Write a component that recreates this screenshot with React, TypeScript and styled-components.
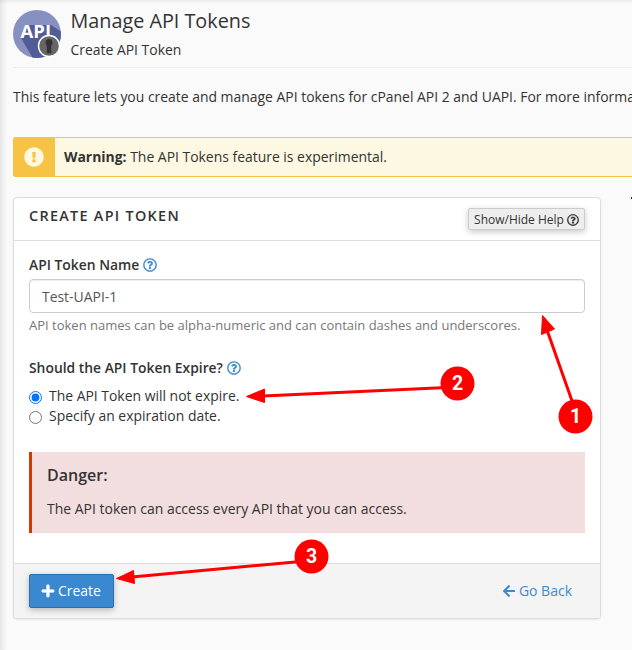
import React from "react";
import styled, { createGlobalStyle } from "styled-components";
import { FaArrowLeft, FaExclamationCircle, FaPlus, FaRegQuestionCircle } from "react-icons/fa";

const GlobalStyle = createGlobalStyle`
  * { box-sizing: border-box; }
  html, body { margin: 0; overflow: hidden; }
  body {
    background: #fafafa;
    color: #333;
    font: 13.93px/20px "Open Sans", sans-serif;
  }
`;

const Page = styled.main`
  position: relative;
  width: 632px;
  height: 650px;
  padding: 10px 0 0 13px;
  overflow: hidden;
  background:
    linear-gradient(to right, rgba(0, 0, 0, 0.08), rgba(0, 0, 0, 0) 7px),
    linear-gradient(to bottom, rgba(0, 0, 0, 0.06), rgba(0, 0, 0, 0) 4px),
    #fafafa;
`;

const PageHeader = styled.header`
  display: flex;
  gap: 8.5px;
  height: 58px;
  border-bottom: 1px solid #eee;
`;

const AppIcon = styled.svg`
  display: block;
  flex: none;
  width: 49px;
  height: 49px;
`;

const Title = styled.h1`
  margin: -3px 0 0;
  font-size: 19.8px;
  font-weight: 400;
  line-height: 28px;
`;

const Subtitle = styled.div`
  margin-top: 5px;
`;

const Description = styled.p`
  margin: 19px 0 30px;
  white-space: nowrap;
`;

const Alert = styled.div`
  display: flex;
  width: 640px;
  height: 40px;
  border: 1px solid #f6c342;
  border-radius: 2px;
  background: #fdf8e1;
`;

const AlertIcon = styled.div`
  display: flex;
  align-items: center;
  justify-content: center;
  width: 41px;
  padding-right: 2px;
  background: #f6c342;
  color: #fdf8e1;
  font-size: 20px;
`;

const AlertText = styled.div`
  padding: 9px;
`;

const Columns = styled.div`
  display: flex;
  gap: 30px;
  margin-top: 20px;
`;

const AsideEdge = styled.div`
  width: 8px;
  height: 2px;
  background: #333;
`;

const Panel = styled.section`
  flex: none;
  width: 588px;
  height: 422px;
  border: 1px solid #ddd;
  border-radius: 4px;
  background: #fff;
  box-shadow: 0 1px 2px rgba(0, 0, 0, 0.08);
  overflow: hidden;
`;

const PanelHeader = styled.div`
  display: flex;
  justify-content: space-between;
  height: 43px;
  padding: 9px 15px 0;
  border-bottom: 1px solid #ddd;
`;

const PanelTitle = styled.h2`
  margin: 0;
  font-size: 14.4px;
  font-weight: 600;
  line-height: 18px;
  letter-spacing: 1.3px;
`;

const HelpButton = styled.button`
  display: flex;
  align-items: center;
  justify-content: center;
  gap: 3px;
  width: 117px;
  height: 22px;
  margin-top: 1px;
  padding: 1px 0 0;
  border: 1px solid #ccc;
  border-radius: 2px;
  background: #eee;
  color: #333;
  font: 12px/18px "Open Sans", sans-serif;
  box-shadow: 0 2px 6px rgba(0, 0, 0, 0.22);
  white-space: nowrap;
  svg { stroke: currentColor; stroke-width: 8px; overflow: visible; }
`;

const PanelBody = styled.div`
  height: 322px;
  padding: 14px 15px 0;
`;

const Label = styled.div`
  display: flex;
  align-items: center;
  gap: 4px;
  font-size: 13.86px;
  font-weight: 600;
  svg {
    color: #428bca;
    font-size: 14px;
    stroke: currentColor;
    stroke-width: 6px;
    overflow: visible;
  }
`;

const TextInput = styled.input`
  display: block;
  width: 100%;
  height: 34px;
  margin-top: 4px;
  padding: 6px 12px;
  border: 1px solid #ccc;
  border-radius: 4px;
  color: #555;
  background: #fff;
  font: 13.93px/20px "Open Sans", sans-serif;
  box-shadow: inset 0 1px 1px rgba(0, 0, 0, 0.075);
`;

const HelpText = styled.div`
  margin: 2px 0 23px;
  color: #777;
  font-size: 13px;
`;

const Choice = styled.label<{ $first?: boolean }>`
  display: flex;
  height: 20px;
  margin-top: ${({ $first }) => ($first ? "8px" : "0")};
  input {
    width: 13px;
    height: 13px;
    margin: 5px 7px 0 0;
  }
`;

const Callout = styled.div`
  height: 81px;
  margin-top: 26px;
  padding: 13px 15px;
  border-left: 3px solid #cf3c00;
  background: #f2dede;
`;

const CalloutTitle = styled.h3`
  margin: 0 0 14px;
  font-size: 16px;
  font-weight: 600;
  line-height: 20px;
`;

const CalloutText = styled.div`
  font-size: 13.97px;
`;

const PanelFooter = styled.footer`
  display: flex;
  align-items: flex-start;
  justify-content: space-between;
  height: 56px;
  padding: 10px 28px 0 15px;
  border-top: 1px solid #ddd;
  background: #f4f4f4;
`;

const CreateButton = styled.button`
  display: flex;
  align-items: center;
  justify-content: center;
  gap: 3px;
  width: 85px;
  height: 34px;
  padding: 0 1px 0 0;
  border: 1px solid #2a6fb0;
  border-radius: 2px;
  color: #fff;
  background: #3a89d0;
  font: 13.93px/20px "Open Sans", sans-serif;
  box-shadow: 0 2px 6px rgba(0, 0, 0, 0.26);
  svg { stroke: currentColor; stroke-width: 22px; }
`;

const BackLink = styled.a`
  display: flex;
  align-items: center;
  gap: 3px;
  height: 34px;
  color: #428bca;
  font-size: 14px;
`;

const Annotations = styled.svg`
  position: absolute;
  inset: 0;
  width: 632px;
  height: 650px;
  pointer-events: none;
  text {
    fill: #fff;
    font: 700 19.5px Roboto, sans-serif;
    text-anchor: middle;
  }
`;

type Step = {
  n: number;
  cx: number;
  cy: number;
  from: [number, number];
  to: [number, number];
  head: string;
};

const steps: Step[] = [
  { n: 1, cx: 575.5, cy: 416.5, from: [577.5, 416.5], to: [547, 330], head: "542.5,315.5 554.5,329 541.5,334.5" },
  { n: 2, cx: 457.5, cy: 383.5, from: [457.5, 387], to: [263, 396], head: "246.5,396.5 264.5,389 264.5,402.5" },
  { n: 3, cx: 311.5, cy: 556.5, from: [311.5, 560.5], to: [132, 577], head: "116.5,578.5 133.5,570.5 134.5,583.5" },
];

export default function App() {
  return (
    <Page>
      <GlobalStyle />
      <PageHeader>
        <AppIcon viewBox="0 0 49 49">
          <defs>
            <clipPath id="disc"><circle cx="24" cy="24" r="24" /></clipPath>
          </defs>
          <circle cx="24" cy="24" r="24" fill="#8791c1" />
          <path clipPath="url(#disc)" d="M8 28 15 15 38 15 52 24 52 52 22 52Z" fill="#515c96" />
          <text x="22.8" y="28.3" fill="#fff" textAnchor="middle" fontFamily="Open Sans, sans-serif" fontWeight="700" fontSize="18.6" textLength="30.5" lengthAdjust="spacingAndGlyphs">API</text>
          <circle cx="36" cy="36" r="11.2" fill="#fff" />
          <circle cx="36" cy="36" r="9.8" fill="#666" />
          <circle cx="36" cy="32.4" r="3.5" fill="#333" />
          <path d="M33.8 33h4.4v10.3h-4.4z" fill="#333" />
        </AppIcon>
        <div>
          <Title>Manage API Tokens</Title>
          <Subtitle>Create API Token</Subtitle>
        </div>
      </PageHeader>
      <Description>This feature lets you create and manage API tokens for cPanel API 2 and UAPI. For more information</Description>
      <Alert>
        <AlertIcon><FaExclamationCircle /></AlertIcon>
        <AlertText><strong>Warning:</strong> The API Tokens feature is experimental.</AlertText>
      </Alert>
      <Columns>
        <Panel>
          <PanelHeader>
            <PanelTitle>CREATE API TOKEN</PanelTitle>
            <HelpButton>Show/Hide Help <FaRegQuestionCircle /></HelpButton>
          </PanelHeader>
          <PanelBody>
            <Label>API Token Name <FaRegQuestionCircle /></Label>
            <TextInput defaultValue="Test-UAPI-1" />
            <HelpText>API token names can be alpha-numeric and can contain dashes and underscores.</HelpText>
            <Label>Should the API Token Expire? <FaRegQuestionCircle /></Label>
            <Choice $first><input type="radio" name="expiry" defaultChecked />The API Token will not expire.</Choice>
            <Choice><input type="radio" name="expiry" />Specify an expiration date.</Choice>
            <Callout>
              <CalloutTitle>Danger:</CalloutTitle>
              <CalloutText>The API token can access every API that you can access.</CalloutText>
            </Callout>
          </PanelBody>
          <PanelFooter>
            <CreateButton><FaPlus />Create</CreateButton>
            <BackLink><FaArrowLeft />Go Back</BackLink>
          </PanelFooter>
        </Panel>
        <AsideEdge />
      </Columns>
      <Annotations viewBox="0 0 632 650">
        {steps.map((s) => (
          <g key={s.n}>
            <line x1={s.from[0]} y1={s.from[1]} x2={s.to[0]} y2={s.to[1]} stroke="#f00" strokeWidth="3" />
            <polygon points={s.head} fill="#f00" stroke="#f00" strokeLinejoin="round" />
            <circle cx={s.cx} cy={s.cy} r="17" fill="#f00" />
            <text x={s.cx} y={s.cy + 6.5}>{s.n}</text>
          </g>
        ))}
      </Annotations>
    </Page>
  );
}
